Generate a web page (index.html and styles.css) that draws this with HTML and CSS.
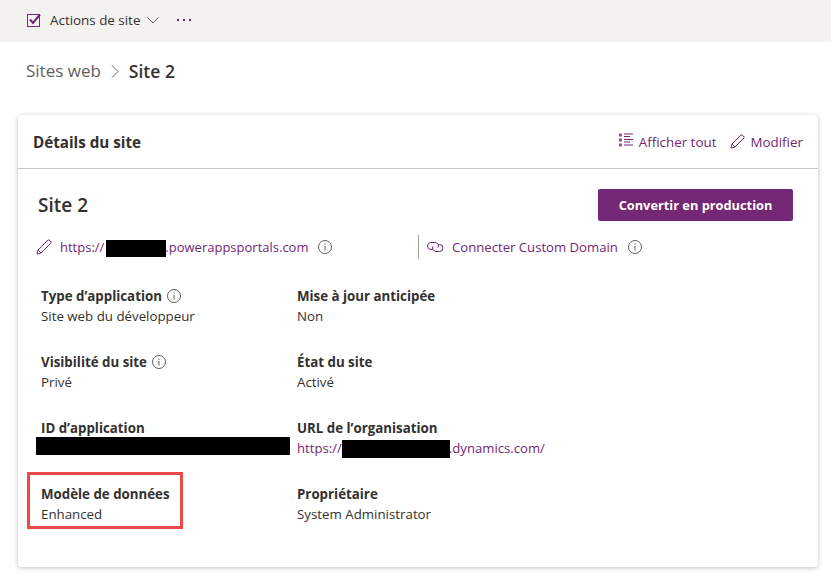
FILE: index.html
```
<!DOCTYPE html>
<html lang="fr">
<head>
<meta charset="utf-8">
<title>Site 2</title>
<link rel="stylesheet" href="styles.css">
</head>
<body>
<div class="toolbar">
  <svg class="ic-check" width="14" height="14" viewBox="0 0 14 14"><rect x="0.5" y="1.5" width="12" height="12" fill="none" stroke="#742774"/><path d="M3 6.500 L6 10 L13 1.500" fill="none" stroke="#742774" stroke-width="2"/></svg>
  <span class="tool-label">Actions de site</span>
  <svg class="ic-chev" width="12" height="7" viewBox="0 0 12 7"><path d="M0.5 0.5 L6 6 L11.5 0.5" fill="none" stroke="#605e5c"/></svg>
  <span class="dots"><i></i><i></i><i></i></span>
</div>
<nav class="crumbs">
  <span class="crumb">Sites web</span>
  <svg width="8" height="13" viewBox="0 0 8 13"><path d="M1 0.5 L7 6.5 L1 12.5" fill="none" stroke="#605e5c"/></svg>
  <strong class="crumb-cur">Site 2</strong>
</nav>
<section class="card">
  <header class="card-head">
    <h2>Détails du site</h2>
    <div class="head-actions">
      <a class="act">
        <svg class="ic-list" width="15" height="15" viewBox="0 0 15 15"><path d="M0 0.500h3v3h-3zM0 5.500h3v3h-3zM0 10.500h3v3h-3z" fill="#742774" opacity="0.8"/><path d="M5 1h9M5 3.500h6M5 6.500h9M5 9h6M5 12h9" stroke="#742774"/></svg>
        Afficher tout</a>
      <a class="act">
        <svg width="15" height="15" viewBox="0 0 15 15"><path d="M1 14 L2 10 L11 1 Q12 0.5 13.500 2 Q14.500 3.500 14 4 L5 13 Z M2 10 L5 13" fill="none" stroke="#742774"/></svg>
        Modifier</a>
    </div>
  </header>
  <div class="card-body">
    <div class="title-row">
      <h3>Site 2</h3>
      <button class="primary">Convertir en production</button>
    </div>
    <div class="links">
      <div class="link-left">
        <svg width="16" height="16" viewBox="0 0 16 16"><path d="M1 15 L2 11 L12 1 Q13 0.500 14.500 2 Q15.500 3.500 15 4 L5 14 Z M2 11 L5 14" fill="none" stroke="#742774"/></svg>
        <a class="url">https://<span class="redact redact-host"></span>.powerappsportals.com</a>
        <svg class="info info-url" width="14" height="14" viewBox="0 0 14 14"><circle cx="7" cy="7" r="6.500" fill="none" stroke="#605e5c"/><path d="M7 6v4.500M7 3.500v1.300" stroke="#605e5c"/></svg>
      </div>
      <div class="link-right">
        <svg width="17" height="12" viewBox="0 0 17 12"><path d="M6 8.500H4a3.500 3.500 0 0 1 0-7h4a3.500 3.500 0 0 1 3 5.200M11 3.500h1.500a3.500 3.500 0 0 1 0 7H9a3.500 3.500 0 0 1-3-5.200" fill="none" stroke="#742774"/></svg>
        <a class="url">Connecter Custom Domain</a>
        <svg class="info info-url" width="14" height="14" viewBox="0 0 14 14"><circle cx="7" cy="7" r="6.500" fill="none" stroke="#605e5c"/><path d="M7 6v4.500M7 3.500v1.300" stroke="#605e5c"/></svg>
      </div>
    </div>
    <div class="grid">
      <div class="cell">
        <div class="k">Type d’application <svg width="14" height="14" viewBox="0 0 14 14"><circle cx="7" cy="7" r="6.500" fill="none" stroke="#605e5c"/><path d="M7 6v4.500M7 3.500v1.300" stroke="#605e5c"/></svg></div>
        <div class="v">Site web du développeur</div>
      </div>
      <div class="cell">
        <div class="k">Mise à jour anticipée</div>
        <div class="v">Non</div>
      </div>
      <div class="cell">
        <div class="k">Visibilité du site <svg width="14" height="14" viewBox="0 0 14 14"><circle cx="7" cy="7" r="6.500" fill="none" stroke="#605e5c"/><path d="M7 6v4.500M7 3.500v1.300" stroke="#605e5c"/></svg></div>
        <div class="v">Privé</div>
      </div>
      <div class="cell">
        <div class="k">État du site</div>
        <div class="v">Activé</div>
      </div>
      <div class="cell">
        <div class="k">ID d’application</div>
        <div class="v"><span class="redact redact-id"></span></div>
      </div>
      <div class="cell">
        <div class="k">URL de l’organisation</div>
        <div class="v"><a class="url">https://<span class="redact redact-org"></span>.dynamics.com/</a></div>
      </div>
      <div class="cell highlighted">
        <div class="k">Modèle de données</div>
        <div class="v">Enhanced</div>
      </div>
      <div class="cell">
        <div class="k">Propriétaire</div>
        <div class="v">System Administrator</div>
      </div>
    </div>
  </div>
</section>
</body>
</html>
```
FILE: styles.css
```
*, *::after { box-sizing: border-box; }
html, body { margin: 0; padding: 0; }
body {
  width: 831px; height: 575px; overflow: hidden; background: #fff;
  font-family: "Open Sans", "Noto Sans", sans-serif;
  font-size: 13.3px; line-height: 20px; color: #323130;
}
svg { flex: none; }
.toolbar {
  height: 42px; background: #f3f2f1; display: flex; align-items: center;
  padding: 0 0 2px 27px;
}
.tool-label { margin-left: 9px; font-size: 13.4px; }
.ic-chev { margin-left: 7px; }
.dots { display: flex; gap: 4px; margin-left: 18px; }
.dots i { width: 2px; height: 2px; background: #742774; display: block; }
.crumbs { display: flex; align-items: center; height: 60px; padding-left: 26px; padding-bottom: 2px; }
.crumb { font-size: 17px; color: #605e5c; }
.crumbs svg { margin: 0 10px 0 10px; }
.crumb-cur { font-size: 17.5px; font-weight: 600; }
.card {
  margin: 13px 13px 0 18px; height: 452px; background: #fff; border-radius: 4px;
  box-shadow: 0 1px 5px rgba(0,0,0,.25);
}
.card-head {
  height: 54px; border-bottom: 1px solid #c8c6c4; display: flex; align-items: center;
  justify-content: space-between; padding: 0 15px;
}
h2 { margin: 0; font-size: 15.2px; font-weight: 700; }
.head-actions { display: flex; gap: 14px; }
.act { display: flex; align-items: center; gap: 5px; color: #742774; font-size: 13.4px; }
.ic-list { margin-top: -3px; }
.card-body { padding: 20px 25px 0 20px; }
.title-row { display: flex; justify-content: space-between; align-items: center; height: 32px; }
h3 { margin: 0; font-size: 19px; font-weight: 600; }
.primary {
  width: 195px; height: 32px; background: #742774; color: #fff; border: 0; border-radius: 2px;
  font: 700 12.8px "Open Sans", "Noto Sans", sans-serif;
}
.links { display: flex; align-items: center; margin-top: 14px; height: 24px; margin-left: -2px; }
.link-left { display: flex; align-items: center; gap: 8px; width: 382px; }
.link-right { display: flex; align-items: center; gap: 8px; border-left: 1px solid #a19f9d; height: 24px; padding-left: 8px; }
.url { color: #742774; font-size: 13.15px; }
.link-left .url { font-size: 13px; }
.info-url { margin-left: 2px; }
.redact { display: inline-block; background: #000; vertical-align: middle; }
.redact-host { width: 60px; height: 17px; margin-left: 2px; margin-right: -1px; }
.redact-org { width: 108px; height: 18px; margin-left: 0; margin-right: -1px; }
.redact-id { width: 254px; height: 18px; margin: -1px 0 0 -5px; display: block; }
.grid { display: grid; grid-template-columns: 256px 1fr; grid-auto-rows: 66px; margin-top: 27px; padding-left: 3px; }
.cell { position: relative; }
.k { font-weight: 700; display: flex; align-items: center; gap: 5px; }
.highlighted::after {
  content: ""; position: absolute; left: -14px; top: -12px; width: 156px; height: 57px;
  border: 3px solid #ea4a45;
}
```
